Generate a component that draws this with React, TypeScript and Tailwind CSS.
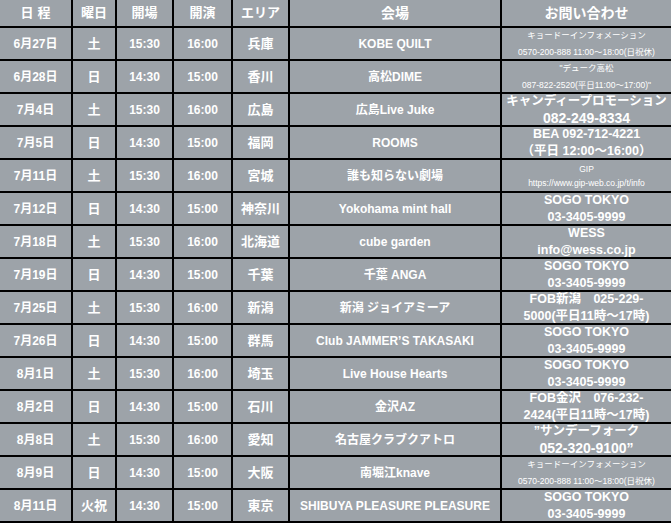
import React from "react";

type Contact = { lines: string[]; size: "sm" | "md" | "lg" | "gip" };

type Row = {
  date: string;
  day: string;
  open: string;
  start: string;
  area: string;
  venue: string;
  contact: Contact;
};

const sogo: Contact = { lines: ["SOGO TOKYO", "03-3405-9999"], size: "md" };
const kyodo: Contact = {
  lines: ["キョードーインフォメーション", "0570-200-888 11:00～18:00(日祝休)"],
  size: "sm",
};

const rows: Row[] = [
  { date: "6月27日", day: "土", open: "15:30", start: "16:00", area: "兵庫", venue: "KOBE QUILT", contact: kyodo },
  {
    date: "6月28日", day: "日", open: "14:30", start: "15:00", area: "香川", venue: "高松DIME",
    contact: { lines: ["\"デューク高松", "087-822-2520(平日11:00～17:00)\""], size: "sm" },
  },
  {
    date: "7月4日", day: "土", open: "15:30", start: "16:00", area: "広島", venue: "広島Live Juke",
    contact: { lines: ["キャンディープロモーション", "082-249-8334"], size: "lg" },
  },
  {
    date: "7月5日", day: "日", open: "14:30", start: "15:00", area: "福岡", venue: "ROOMS",
    contact: { lines: ["BEA 092-712-4221", "（平日 12:00～16:00）"], size: "md" },
  },
  {
    date: "7月11日", day: "土", open: "15:30", start: "16:00", area: "宮城", venue: "誰も知らない劇場",
    contact: { lines: ["GIP", "https://www.gip-web.co.jp/t/info"], size: "gip" },
  },
  { date: "7月12日", day: "日", open: "14:30", start: "15:00", area: "神奈川", venue: "Yokohama mint hall", contact: sogo },
  {
    date: "7月18日", day: "土", open: "15:30", start: "16:00", area: "北海道", venue: "cube garden",
    contact: { lines: ["WESS", "info@wess.co.jp"], size: "md" },
  },
  { date: "7月19日", day: "日", open: "14:30", start: "15:00", area: "千葉", venue: "千葉 ANGA", contact: sogo },
  {
    date: "7月25日", day: "土", open: "15:30", start: "16:00", area: "新潟", venue: "新潟 ジョイアミーア",
    contact: { lines: ["FOB新潟　025-229-", "5000(平日11時～17時)"], size: "md" },
  },
  { date: "7月26日", day: "日", open: "14:30", start: "15:00", area: "群馬", venue: "Club JAMMER’S TAKASAKI", contact: sogo },
  { date: "8月1日", day: "土", open: "15:30", start: "16:00", area: "埼玉", venue: "Live House Hearts", contact: sogo },
  {
    date: "8月2日", day: "日", open: "14:30", start: "15:00", area: "石川", venue: "金沢AZ",
    contact: { lines: ["FOB金沢　076-232-", "2424(平日11時～17時)"], size: "md" },
  },
  {
    date: "8月8日", day: "土", open: "15:30", start: "16:00", area: "愛知", venue: "名古屋クラブクアトロ",
    contact: { lines: ["”サンデーフォーク", "052-320-9100”"], size: "lg" },
  },
  { date: "8月9日", day: "日", open: "14:30", start: "15:00", area: "大阪", venue: "南堀江knave", contact: kyodo },
  { date: "8月11日", day: "火祝", open: "14:30", start: "15:00", area: "東京", venue: "SHIBUYA PLEASURE PLEASURE", contact: sogo },
];

const cell =
  "bg-[#9da3a9] text-white font-bold flex items-center justify-center text-center overflow-hidden whitespace-nowrap";

const contactClass: Record<Contact["size"], string> = {
  sm: "text-[8.5px] leading-[17px] font-normal",
  gip: "text-[8.5px] leading-[14px] font-normal",
  md: "text-[12.5px] leading-[17px]",
  lg: "leading-[17px]",
};

export default function App() {
  return (
    <div
      className="w-[671px] h-[523px] bg-black grid grid-cols-[71px_42px_55px_57px_55px_210px_169px] grid-rows-[26px_repeat(15,31px)] gap-[2px] pb-[2px]"
      style={{ fontFamily: '"Liberation Sans", "Noto Sans CJK JP", sans-serif' }}
    >
      <div className={`${cell} text-[13px] tracking-[0.3em] pl-[4px]`}>日程</div>
      <div className={`${cell} text-[13px]`}>曜日</div>
      <div className={`${cell} text-[13px]`}>開場</div>
      <div className={`${cell} text-[13px]`}>開演</div>
      <div className={`${cell} text-[13px]`}>エリア</div>
      <div className={`${cell} text-[14px]`}>会場</div>
      <div className={`${cell} text-[14px]`}>お問い合わせ</div>

      {rows.map((r) => (
        <React.Fragment key={r.date}>
          <div className={`${cell} text-[12px]`}>{r.date}</div>
          <div className={`${cell} text-[13px]`}>{r.day}</div>
          <div className={`${cell} text-[12px]`}>{r.open}</div>
          <div className={`${cell} text-[12px]`}>{r.start}</div>
          <div className={`${cell} text-[13px]`}>{r.area}</div>
          <div className={`${cell} text-[12px]`}>{r.venue}</div>
          <div className={`${cell} flex-col ${contactClass[r.contact.size]}`}>
            {r.contact.size === "lg" ? (
              <>
                <span className="block text-[12.5px]">{r.contact.lines[0]}</span>
                <span className="block text-[14px]">{r.contact.lines[1]}</span>
              </>
            ) : (
              r.contact.lines.map((l) => (
                <span key={l} className="block">
                  {l}
                </span>
              ))
            )}
          </div>
        </React.Fragment>
      ))}
    </div>
  );
}
